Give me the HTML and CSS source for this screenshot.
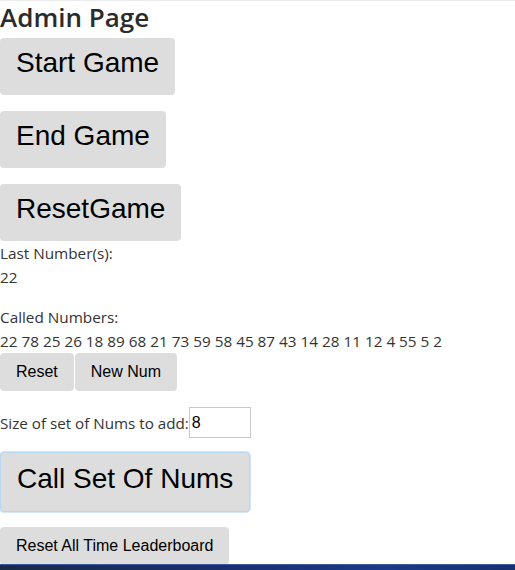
FILE: index.html
```html
<!DOCTYPE html>
<html>
<head>
<meta charset="utf-8">
<link rel="stylesheet" href="styles.css">
</head>
<body>
<div class="page">
  <h1 class="title">Admin Page</h1>
  <button class="btn btn-big">Start Game</button>
  <button class="btn btn-big">End Game</button>
  <button class="btn btn-big btn-last">ResetGame</button>
  <div class="info">
    <div class="line">Last Number(s):</div>
    <div class="line">22</div>
  </div>
  <div class="info">
    <div class="line">Called Numbers:</div>
    <div class="line">22 78 25 26 18 89 68 21 73 59 58 45 87 43 14 28 11 12 4 55 5 2</div>
  </div>
  <div class="row">
    <button class="btn btn-small">Reset</button>
    <button class="btn btn-small">New Num</button>
  </div>
  <div class="size-row">
    <span class="size-label">Size of set of Nums to add:</span><input class="size-input" type="text" value="8">
  </div>
  <button class="btn btn-big btn-focus">Call Set Of Nums</button>
  <button class="btn btn-small btn-lead">Reset All Time Leaderboard</button>
</div>
<div class="taskbar"></div>
</body>
</html>
```
FILE: styles.css
```css
html, body {
  margin: 0;
  padding: 0;
  background: #fff;
}
body {
  font-family: "Open Sans", "Noto Sans", sans-serif;
  color: #333;
  border-top: 1px solid #ececec;
}
.page {
  display: flex;
  flex-direction: column;
  align-items: flex-start;
}
.title {
  margin: 0 0 4px 0;
  font-size: 26px;
  font-weight: 600;
  line-height: 33px;
  color: #2b2b2b;
}
.btn {
  font-family: "Liberation Sans", Arial, sans-serif;
  background: #dddddd;
  color: #000;
  border: 0;
  border-radius: 4px;
  margin: 0;
  cursor: pointer;
}
.btn-big {
  font-size: 28px;
  line-height: 33px;
  padding: 8px 16px 16px;
  margin-bottom: 16px;
}
.btn-last {
  margin-bottom: 0;
}
.btn-small {
  font-size: 16px;
  line-height: 18px;
  padding: 10px 16px;
}
.info {
  font-size: 15.3px;
  line-height: 24px;
  margin-bottom: 16px;
}
.info + .info {
  margin-bottom: 0;
}
.row {
  display: flex;
  gap: 1px;
  margin-bottom: 16px;
}
.size-row {
  display: flex;
  align-items: center;
  font-size: 15.2px;
  margin-bottom: 14px;
}
.size-input {
  box-sizing: border-box;
  width: 62px;
  height: 31px;
  padding: 1px 2px;
  border: 1px solid #c8c8c8;
  font-family: "Liberation Sans", Arial, sans-serif;
  font-size: 16px;
  color: #000;
  margin: 0;
}
.btn-focus {
  border: 1px solid #b9d6f3;
  box-shadow: 0 0 0 1px #d3e5f8;
  padding: 9px 16px 16px;
  margin-bottom: 15px;
}
.btn-lead {
  padding: 10px 16px;
}
.taskbar {
  position: fixed;
  left: 0;
  right: 0;
  bottom: 0;
  height: 5px;
  background: linear-gradient(90deg, #1b2a4a 0%, #1a3070 45%, #1c3a86 75%, #17306e 100%);
  border-top: 1px solid #3b5aa0;
}
```
